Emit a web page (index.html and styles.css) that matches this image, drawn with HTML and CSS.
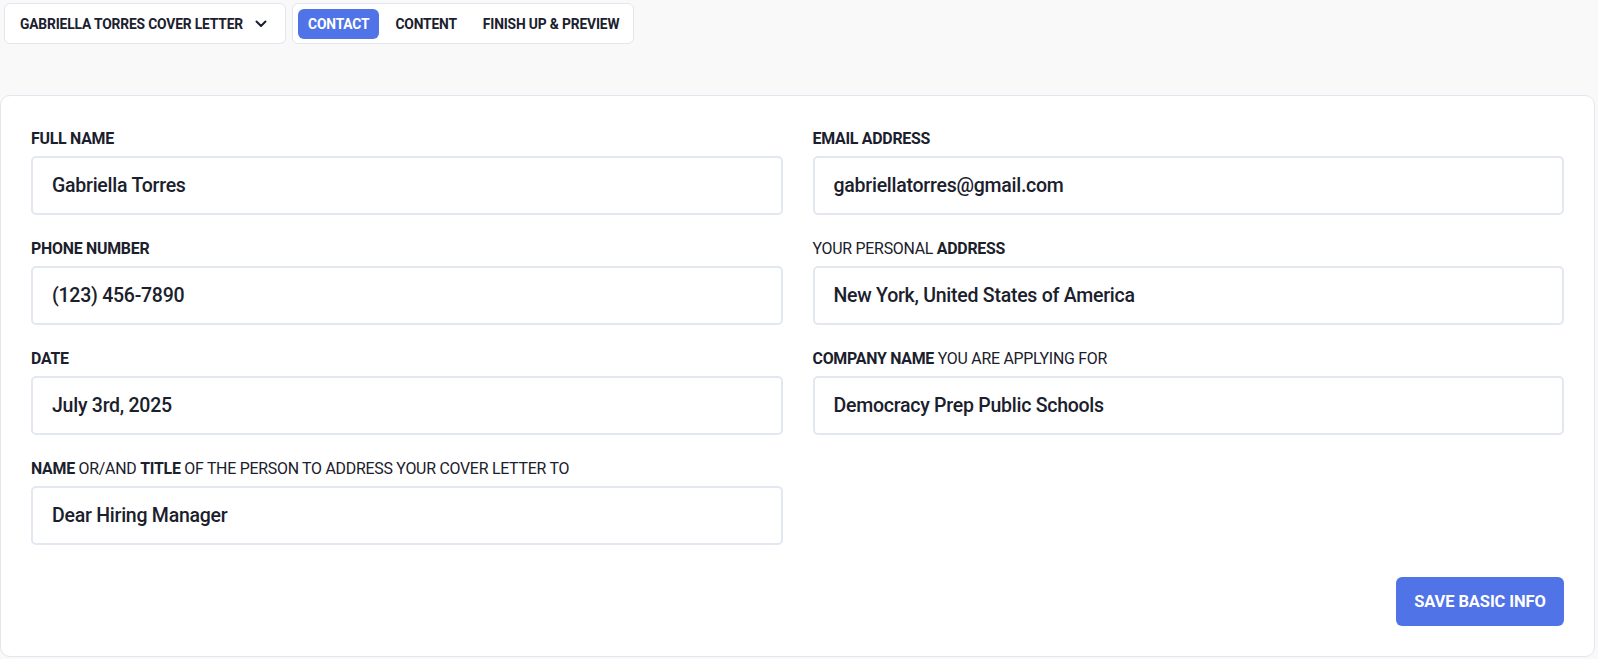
FILE: index.html
```html
<!DOCTYPE html>
<html lang="en">
<head>
<meta charset="utf-8">
<title>Cover Letter - Contact</title>
<link rel="stylesheet" href="styles.css">
</head>
<body>
<header class="topbar">
  <div class="doc-select">
    <span class="doc-title">GABRIELLA TORRES COVER LETTER</span>
    <svg class="chev" width="12" height="8" viewBox="0 0 12 8"><path d="M1.5 1.5 L6 6 L10.5 1.5" fill="none" stroke="#1a202c" stroke-width="2" stroke-linecap="round" stroke-linejoin="round"/></svg>
  </div>
  <nav class="steps">
    <span class="step active">CONTACT</span>
    <span class="step">CONTENT</span>
    <span class="step">FINISH UP &amp; PREVIEW</span>
  </nav>
</header>

<main class="card">
  <div class="grid">
    <div class="field">
      <label class="label"><b>FULL NAME</b></label>
      <div class="input">Gabriella Torres</div>
    </div>
    <div class="field">
      <label class="label"><b>EMAIL ADDRESS</b></label>
      <div class="input">gabriellatorres@gmail.com</div>
    </div>
    <div class="field">
      <label class="label"><b>PHONE NUMBER</b></label>
      <div class="input">(123) 456-7890</div>
    </div>
    <div class="field">
      <label class="label">YOUR PERSONAL <b>ADDRESS</b></label>
      <div class="input">New York, United States of America</div>
    </div>
    <div class="field">
      <label class="label"><b>DATE</b></label>
      <div class="input">July 3rd, 2025</div>
    </div>
    <div class="field">
      <label class="label"><b>COMPANY NAME</b> YOU ARE APPLYING FOR</label>
      <div class="input">Democracy Prep Public Schools</div>
    </div>
    <div class="field">
      <label class="label"><b>NAME</b> OR/AND <b>TITLE</b> OF THE PERSON TO ADDRESS YOUR COVER LETTER TO</label>
      <div class="input">Dear Hiring Manager</div>
    </div>
  </div>
  <div class="actions">
    <button class="save">SAVE BASIC INFO</button>
  </div>
</main>
</body>
</html>
```
FILE: styles.css
```css
* { box-sizing: border-box; }
html, body { margin: 0; padding: 0; }
body {
  background: #f9f9fa;
  font-family: Roboto, "Liberation Sans", sans-serif;
  color: #1a202c;
  height: 659px;
  overflow: hidden;
}
.topbar {
  display: flex;
  gap: 6px;
  padding: 3px 4px 0 4px;
}
.doc-select {
  width: 282px;
  height: 41px;
  background: #fff;
  border: 1px solid #e3e6ee;
  border-radius: 6px;
  display: flex;
  align-items: center;
  padding-left: 15px;
}
.doc-title {
  font-size: 13.8px;
  font-weight: 700;
  letter-spacing: -0.15px;
}
.chev { margin-left: 12px; }
.steps {
  height: 41px;
  background: #fff;
  border: 1px solid #e3e6ee;
  border-radius: 6px;
  display: flex;
  align-items: center;
  gap: 6px;
  padding: 0 4px 0 5px;
}
.step {
  height: 30px;
  display: flex;
  align-items: center;
  padding: 0 10px;
  font-size: 13.8px;
  font-weight: 700;
  border-radius: 6px;
  letter-spacing: -0.15px;
}
.step.active {
  background: #5073e8;
  color: #fff;
}
.card {
  margin: 51px 3px 0 0;
  background: #fff;
  border: 1px solid #e3e6ee;
  border-radius: 10px;
  height: 562px;
  padding: 33px 30px 29px 30px;
}
.grid {
  display: grid;
  grid-template-columns: 1fr 1fr;
  column-gap: 30px;
  row-gap: 24px;
}
.field { display: flex; flex-direction: column; }
.label {
  font-size: 15.9px;
  line-height: 20px;
  font-weight: 400;
  color: #1a202c;
  margin-bottom: 7px;
  letter-spacing: -0.25px;
}
.label b { font-weight: 700; }
.input {
  height: 59px;
  border: 2px solid #e2e7f2;
  border-radius: 5px;
  padding-left: 19px;
  display: flex;
  align-items: center;
  font-size: 19.5px;
  font-weight: 500;
  letter-spacing: -0.25px;
  color: #1a202c;
}
.actions {
  display: flex;
  justify-content: flex-end;
  margin-top: 32px;
}
.save {
  width: 168px;
  height: 49px;
  border: none;
  border-radius: 6px;
  background: #5073e8;
  color: #fff;
  font-family: Roboto, "Liberation Sans", sans-serif;
  font-size: 16.5px;
  font-weight: 700;
  letter-spacing: -0.1px;
}
```
